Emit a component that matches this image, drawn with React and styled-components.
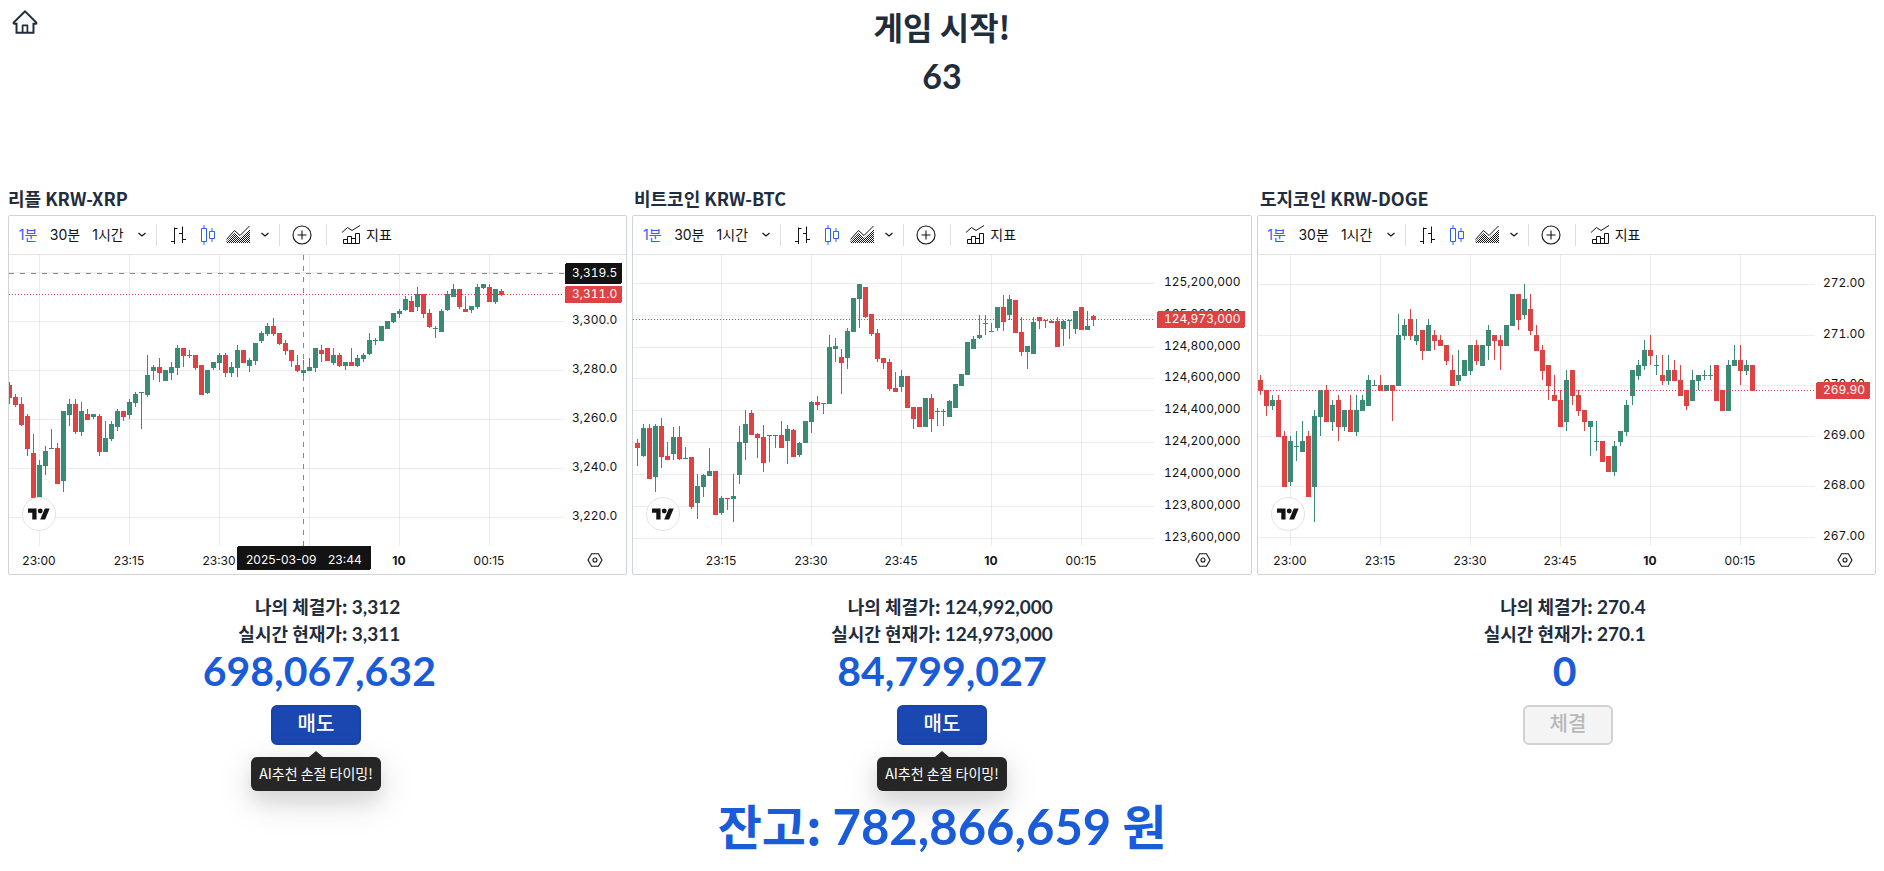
import React, { useId } from "react";
import styled, { createGlobalStyle, css } from "styled-components";
import { AiOutlineHome } from "react-icons/ai";

const GlobalStyle = createGlobalStyle`
  *, *::before, *::after { box-sizing: border-box; }
  body {
    margin: 0;
    background: #fff;
    color: #1f2d3d;
    font-family: "Noto Sans CJK KR", "Noto Sans", sans-serif;
    font-size: 18px;
    line-height: 27px;
  }
  h1, h2, p { margin: 0; }
  button { font-family: inherit; }
`;

const UP = "#3a8a76";
const DOWN = "#df4242";
const INK = "#131313";
const BLUE = "#2962ff";

/* ---------- market data ---------- */

// Each candle is "direction high,bodyTop,bodyBottom,low". Levels are counted
// downwards in thirds of a pixel, and the plot starts at level 225.
const LEVEL_TOP = 225;
const levelToY = (level) => Math.round((level - LEVEL_TOP) / 3);

const parseCandles = (source) =>
  source
    .trim()
    .split(/\s+/)
    .map((item) => ({
      up: item[0] === "g",
      levels: item.slice(1).split(",").map(Number),
    }));

const XRP = parseCandles(`
r606,615,655,672 r642,651,675,681 r651,672,735,738 r702,708,807,828 r762,819,955,955
g840,855,955,955 g798,813,858,885 g747,804,807,807 r789,804,912,912 g693,693,903,936
g657,672,705,738 r657,672,756,762 g666,693,756,768 r687,702,720,720 g702,702,711,717
r702,708,816,828 g723,774,816,816 g723,732,777,783 g687,693,741,753 r693,693,711,723
g657,666,705,717 g636,642,669,681 g636,636,639,747 g525,585,645,651 g555,561,573,600
r534,561,579,606 g570,570,603,603 g546,561,579,600 g495,504,564,585 r504,504,528,561
g510,525,528,534 r525,525,564,570 r555,555,645,645 g570,570,639,642 g546,546,564,570
g519,525,549,570 r519,525,579,591 g546,561,579,591 g495,510,564,591 r510,510,549,549
g534,540,558,576 g489,489,543,555 g453,459,483,489 g429,438,462,468 r414,438,462,468
r459,459,492,495 r480,489,513,525 r510,510,543,561 r525,555,573,576 g540,570,579,591
g534,561,573,573 g504,504,564,576 r495,510,522,546 r504,504,543,543 g504,525,549,555
r519,525,558,561 g546,546,558,570 r504,546,558,558 g525,534,558,561 g519,525,537,546
g459,480,522,525 g474,480,483,495 g438,438,483,483 g423,423,447,447 g399,399,426,429
g387,393,402,414 g348,357,390,393 r348,363,396,396 g321,342,381,393 r342,342,402,414
r387,399,441,444 g438,444,447,474 g387,393,456,456 g333,342,390,393 g312,327,351,351
r327,327,381,387 r348,387,396,396 g378,378,390,399 g312,321,381,387 g312,312,324,327
r312,321,366,366 g327,327,366,372 r327,333,345,348`);

const BTC = parseCandles(`
r777,789,804,858 g732,744,828,831 r732,744,897,897 g732,738,891,936 r714,738,831,864
r786,828,840,840 g741,771,822,840 r738,771,837,840 g801,834,837,837 r831,831,981,987
g882,918,969,1017 g882,885,921,951 g804,873,888,888 r873,873,1005,1005 g948,954,999,1005
r954,954,957,990 g882,948,957,1026 g738,786,885,912 g690,732,789,840 r690,699,765,765
r759,762,774,834 r735,771,849,876 r765,765,768,846 r765,765,768,804 r723,765,804,804
g735,747,783,852 r747,750,831,831 g786,789,825,831 g723,723,789,789 g663,666,726,759
r648,666,675,690 g669,669,672,702 g465,501,672,672 g474,498,507,546 r507,531,549,642
g444,453,534,567 g354,354,456,456 g312,312,357,444 r321,321,411,414 r402,402,462,468
r447,459,537,546 r534,534,549,567 r537,546,627,633 r576,624,636,636 g570,588,621,636
r588,588,684,684 r681,681,717,747 r681,681,741,741 g654,654,741,741 r642,654,717,756
r684,693,696,738 g687,693,696,738 g660,663,711,711 g612,612,684,684 g582,582,618,618
g486,486,585,585 g468,477,507,507 g405,465,474,477 r405,429,432,465 g429,453,456,456
g381,381,444,453 r345,381,426,453 g345,357,405,420 r360,360,459,459 r411,456,516,528
g498,498,516,567 g411,426,522,522 r411,411,423,447 r420,420,423,444 r420,423,429,429
r411,423,501,501 g420,423,447,498 g420,420,423,477 g393,393,447,462 r381,381,450,450
g393,438,450,450 r405,408,420,438`);

const DOGE = parseCandles(`
r585,600,633,645 r630,630,678,708 g645,660,678,690 r645,660,771,771 r753,768,921,921
g768,783,906,918 g753,798,801,843 g723,783,816,816 r753,768,951,951 g690,708,921,1026
g630,630,711,768 r615,630,726,726 g660,675,726,753 r645,660,741,783 g690,690,741,753
r645,690,756,756 g645,690,756,768 g645,660,693,693 g585,600,678,678 g600,615,618,618
r585,615,633,633 g615,615,633,633 r615,615,633,723 g402,465,618,618 g417,435,468,480
r387,417,468,480 g417,465,483,495 r450,450,513,540 g417,435,513,513 r450,465,483,510
r465,480,498,498 r495,495,543,555 r525,570,618,618 g510,585,603,615 g540,540,588,588
g495,495,573,585 r480,495,543,555 g495,495,558,558 g435,450,498,540 r465,465,483,540
r465,480,498,570 g435,435,498,498 g342,342,438,438 r342,342,420,450 g312,357,405,417
r342,387,453,465 r435,465,513,513 r495,510,573,600 r555,555,618,660 r585,645,663,663
r630,660,741,741 g570,600,726,753 r570,570,648,675 r630,645,693,708 r690,690,726,753
g723,723,741,828 g723,783,786,813 r783,783,846,846 r828,828,876,876 g783,798,876,888
g753,753,786,798 g660,675,756,768 g570,570,648,675 g540,555,588,600 g480,510,558,570
r465,510,528,555 g525,555,558,585 r525,585,603,615 g525,570,603,615 r540,570,603,603
r555,600,648,648 r630,630,678,690 g570,600,663,663 g585,585,603,630 g570,585,588,600
g555,585,588,600 r555,555,663,663 r630,630,693,693 g540,555,693,693 g495,540,558,558
r495,540,573,615 g540,555,573,585 r555,555,633,633`);

const MARKETS = [
  {
    id: "xrp",
    title: "리플 KRW-XRP",
    candles: XRP,
    start: 0,
    axisWidth: 62,
    prices: [[276, ""], [423, "3,300.0"], [570, "3,280.0"], [717, "3,260.0"], [864, "3,240.0"], [1011, "3,220.0"]],
    times: [[30, "23:00"], [120, "23:15"], [210, "23:30"], [300, ""], [390, "10"], [480, "00:15"]],
    last: { level: 342, label: "3,311.0", width: 57 },
    cursor: { x: 294, y: 18, price: "3,319.5", date: "2025-03-09", time: "23:44" },
    bought: "3,312",
    now: "3,311",
    value: "698,067,632",
    action: "매도",
    hint: "AI추천 손절 타이밍!",
  },
  {
    id: "btc",
    title: "비트코인 KRW-BTC",
    candles: BTC,
    start: 4,
    axisWidth: 95,
    prices: [
      [309, "125,200,000"], [405, "125,000,000"], [501, "124,800,000"], [594, "124,600,000"], [690, "124,400,000"],
      [786, "124,200,000"], [882, "124,000,000"], [978, "123,800,000"], [1074, "123,600,000"],
    ],
    times: [[88, "23:15"], [178, "23:30"], [268, "23:45"], [358, "10"], [448, "00:15"]],
    last: { level: 417, label: "124,973,000", width: 88 },
    bought: "124,992,000",
    now: "124,973,000",
    value: "84,799,027",
    action: "매도",
    hint: "AI추천 손절 타이밍!",
  },
  {
    id: "doge",
    title: "도지코인 KRW-DOGE",
    candles: DOGE,
    start: 2,
    axisWidth: 60,
    prices: [[312, "272.00"], [465, "271.00"], [615, "270.00"], [768, "269.00"], [918, "268.00"], [1071, "267.00"]],
    times: [[32, "23:00"], [122, "23:15"], [212, "23:30"], [302, "23:45"], [392, "10"], [482, "00:15"]],
    last: { level: 630, label: "269.90", width: 54 },
    bought: "270.4",
    now: "270.1",
    value: "0",
    action: "체결",
    disabled: true,
  },
];

/* ---------- icons ---------- */

const Icon = styled.svg`
  display: block;
  flex: none;
  fill: none;
  stroke: currentColor;
`;

const ChevronIcon = () => (
  <Icon width="10" height="6" viewBox="0 0 10 6" strokeWidth="1.2" aria-hidden="true">
    <path d="M1.5 1l3.5 3 3.5-3" />
  </Icon>
);

const BarsIcon = () => (
  <Icon width="28" height="28" viewBox="0 0 28 28" aria-hidden="true">
    <path d="M10.500 6.500v16.500M10.500 7.500h3M7 20.500h3M18.500 5.500v16.500M15 12.500h3M19 18.500h3" />
  </Icon>
);

const CandlesIcon = () => (
  <Icon width="28" height="28" viewBox="0 0 28 28" aria-hidden="true">
    <path d="M7.500 7.500h5v13h-5zM10 4v3M10 21v3M15.500 10.500h5v7h-5zM18 7v3M18 18v3" />
  </Icon>
);

const AreaIcon = () => {
  const id = useId();
  return (
    <Icon width="28" height="28" viewBox="0 0 28 28" aria-hidden="true">
      <defs>
        <pattern id={id} width="2" height="2" patternUnits="userSpaceOnUse">
          <path d="M0 0h1v1h-1zM1 1h1v1h-1z" fill={INK} stroke="none" />
        </pattern>
      </defs>
      <path d="M2.500 18.500l8-9 5.500 5L25.500 5" />
      <path d="M2 22v-1l8.500-9 5.500 5 10-9v14z" fill={`url(#${id})`} stroke="none" />
    </Icon>
  );
};

const PlusIcon = () => (
  <Icon width="28" height="28" viewBox="0 0 28 28" aria-hidden="true">
    <circle cx="14" cy="14" r="9" strokeWidth="1.1" />
    <path d="M9.500 14h9M14 9.500v9" strokeWidth="1.1" />
  </Icon>
);

const IndicatorIcon = () => (
  <Icon width="28" height="28" viewBox="0 0 28 28" aria-hidden="true">
    <path d="M5 11.500l5.500-5 4.500 3 8-5" />
    <path d="M6.500 22.500v-4h4v-3h4v2h4v-5h4v10zM10.500 22v-4M14.500 22v-5M18.500 22v-5" />
  </Icon>
);

const ScaleIcon = () => (
  <Icon width="16" height="16" viewBox="0 0 16 16" aria-hidden="true">
    <path d="M4.600 1.700h6.800L15 8l-3.600 6.300H4.600L1 8z" strokeWidth="1.100" />
    <circle cx="8" cy="8" r="2" strokeWidth="1.100" />
  </Icon>
);

const LogoIcon = () => (
  <svg width="22" height="12" viewBox="0 4 36 18" aria-hidden="true">
    <path d="M14 22H7V11H0V4h14v18zM28 22h-8l7.500-18h8L28 22z" fill={INK} />
    <circle cx="20" cy="8" r="4" fill={INK} />
  </svg>
);

/* ---------- page ---------- */

const Page = styled.main`
  position: relative;
  padding: 2px 8px 8px;
`;

const HomeLink = styled.a`
  position: absolute;
  top: 8px;
  left: 11px;
  display: flex;
  color: inherit;
  font-size: 28px;
`;

const Header = styled.header`
  display: grid;
  row-gap: 2px;
  margin-bottom: 85px;
  text-align: center;
`;

const Heading = styled.h1`
  font-size: 32px;
  line-height: 48px;
  font-weight: 700;
`;

const Countdown = styled.p`
  font-family: Lato, sans-serif;
  font-size: 34px;
  line-height: 48px;
  font-weight: 700;
`;

const Columns = styled.div`
  display: grid;
  grid-template-columns: repeat(3, minmax(0, 1fr));
  column-gap: ${(p) => p.$gap || 0}px;
  margin-top: ${(p) => p.$top || 0}px;
`;

const ChartTitle = styled.h2`
  font-size: 18px;
  line-height: 27px;
  font-weight: 700;
`;

/* ---------- chart widget ---------- */

const Widget = styled.section`
  height: 360px;
  border: 1px solid #d1d4d6;
  border-radius: 2px;
  color: ${INK};
  font-family: Inter, "Noto Sans CJK KR", sans-serif;
`;

const Toolbar = styled.div`
  display: flex;
  align-items: center;
  height: 39px;
  padding-left: 3px;
  border-bottom: 1px solid #e0e3e6;
`;

const ToolButton = styled.button`
  display: flex;
  align-items: center;
  justify-content: center;
  flex: none;
  gap: 1px;
  height: 28px;
  padding: 0 ${(p) => p.$pad || 0}px;
  margin: 0;
  ${(p) => p.$width && css`width: ${p.$width}px;`}
  border: 0;
  background: none;
  color: ${(p) => (p.$active ? BLUE : INK)};
  font-size: 14px;
  line-height: 28px;
  white-space: nowrap;
`;

const Divider = styled.span`
  flex: none;
  width: 1px;
  height: 22px;
  margin: 0 6px 0 ${(p) => p.$lead || 2}px;
  background: #dcdfe2;
`;

const ChartGrid = styled.div`
  position: relative;
  display: grid;
  grid-template-columns: minmax(0, 1fr) ${(p) => p.$axis}px;
  grid-template-rows: 291px 28px;
`;

const Surface = styled.svg`
  display: block;
  width: 100%;
  height: 100%;
  overflow: hidden;
  shape-rendering: crispEdges;

  text {
    font-family: Inter, sans-serif;
    font-size: 12px;
    fill: ${INK};
  }
`;

const PriceScale = styled(Surface)`
  font-variant-numeric: tabular-nums;
`;

const TagText = styled.text`
  && { fill: #fff; }
`;

const ScaleButton = styled.button`
  display: flex;
  align-items: center;
  justify-content: center;
  padding: 0;
  border: 0;
  background: none;
  color: ${INK};
`;

const LogoLink = styled.a`
  position: absolute;
  left: 13px;
  top: 242px;
  display: flex;
  align-items: center;
  justify-content: center;
  width: 34px;
  height: 34px;
  border: 1px solid #e0e3e6;
  border-radius: 50%;
  background: #fff;
`;

function Candle({ x, up, levels }) {
  const [high, top, bottom, low] = levels.map(levelToY);
  const fill = up ? UP : DOWN;
  return (
    <g fill={fill}>
      <rect x={x} y={high} width="1" height={Math.max(low - high, 1)} />
      <rect x={x - 2} y={top} width="5" height={Math.max(bottom - top, 1)} />
    </g>
  );
}

function Chart({ market }) {
  const { candles, start, prices, times, last, cursor, axisWidth, title } = market;
  const lastY = levelToY(last.level);
  return (
    <Widget aria-label={title}>
      <Toolbar>
        <ToolButton $width={32} $active>1분</ToolButton>
        <ToolButton $width={42}>30분</ToolButton>
        <ToolButton $width={44}>1시간</ToolButton>
        <ToolButton $width={24} aria-label="시간 간격"><ChevronIcon /></ToolButton>
        <Divider />
        <ToolButton $width={30} aria-label="바"><BarsIcon /></ToolButton>
        <ToolButton $width={30} $active aria-label="캔들"><CandlesIcon /></ToolButton>
        <ToolButton $width={30} aria-label="영역"><AreaIcon /></ToolButton>
        <ToolButton $width={24} aria-label="차트 종류"><ChevronIcon /></ToolButton>
        <Divider />
        <ToolButton $width={32} aria-label="비교"><PlusIcon /></ToolButton>
        <Divider $lead={8} />
        <ToolButton $pad={4}><IndicatorIcon />지표</ToolButton>
      </Toolbar>
      <ChartGrid $axis={axisWidth}>
        <Surface role="img" aria-label={`${title} 차트`}>
          <g fill="rgba(0, 0, 0, 0.07)">
            {prices.map(([level]) => (
              <rect key={level} x="0" y={levelToY(level)} width="100%" height="1" />
            ))}
            {times.map(([x]) => (
              <rect key={x} x={x} y="0" width="1" height="291" />
            ))}
          </g>
          {candles.map((c, i) => (
            <Candle key={i} x={start + i * 6} up={c.up} levels={c.levels} />
          ))}
          <line x1="0" x2="100%" y1={lastY + 0.5} y2={lastY + 0.5} stroke={DOWN} strokeDasharray="1 2" />
          {cursor && (
            <g stroke="#85878c" strokeDasharray="5 6">
              <line x1="0" x2="100%" y1={cursor.y + 0.5} y2={cursor.y + 0.5} />
              <line x1={cursor.x + 0.5} x2={cursor.x + 0.5} y1="0" y2="291" />
            </g>
          )}
        </Surface>
        <PriceScale>
          {prices.filter(([, label]) => label).map(([level, label]) => (
            <text key={level} x="8" y={levelToY(level) + 3}>{label}</text>
          ))}
          {cursor && (
            <>
              <rect x="1" y={cursor.y - 10} width={last.width} height="21" rx="2" fill={INK} />
              <TagText x="8" y={cursor.y + 4}>{cursor.price}</TagText>
            </>
          )}
          <rect x="1" y={lastY - 8} width={last.width} height="17" rx="2" fill={DOWN} />
          <TagText x="8" y={lastY + 4}>{last.label}</TagText>
        </PriceScale>
        <Surface>
          {times.filter(([, label]) => label).map(([x, label]) => (
            <text key={x} x={x} y="19" textAnchor="middle" fontWeight={label === "10" ? 700 : 400}>{label}</text>
          ))}
          {cursor && (
            <>
              <rect x={cursor.x - 66} y="0" width="134" height="24" rx="2" fill={INK} />
              <TagText x={cursor.x - 57} y="18">{cursor.date}</TagText>
              <TagText x={cursor.x + 25} y="18">{cursor.time}</TagText>
            </>
          )}
        </Surface>
        <ScaleButton aria-label="스케일 설정"><ScaleIcon /></ScaleButton>
        <LogoLink href="#" aria-label="TradingView"><LogoIcon /></LogoLink>
      </ChartGrid>
    </Widget>
  );
}

/* ---------- trading panel ---------- */

const Quote = styled.div`
  display: flex;
  flex-direction: column;
  align-items: center;
`;

const QuoteLines = styled.div`
  text-align: right;
  font-weight: 700;

  p { height: 27px; }
`;

const Figure = styled.span`
  font-family: Lato, sans-serif;
  font-size: 19px;
`;

const Value = styled.p`
  color: #1a5bd8;
  font-family: Lato, sans-serif;
  font-size: 41px;
  line-height: 48px;
  font-weight: 700;
`;

const TradeCell = styled.div`
  display: flex;
  justify-content: center;
`;

const Trade = styled.div`
  position: relative;
`;

const TradeButton = styled.button`
  display: block;
  width: 90px;
  height: 40px;
  padding: 0 0 4px;
  border: 2px solid #1a43a8;
  border-radius: 6px;
  background: #1b47b0;
  color: #fff;
  font-size: 20px;
  line-height: 32px;
  font-weight: 500;

  &:disabled {
    border-color: #d2d2d2;
    background: #f4f4f4;
    color: #b8b8b8;
  }
`;

const Tooltip = styled.div`
  position: absolute;
  top: 52px;
  left: 50%;
  width: 130px;
  height: 34px;
  border-radius: 6px;
  background: #262626;
  box-shadow: 0 10px 38px rgba(14, 18, 22, 0.13), 0 10px 20px rgba(14, 18, 22, 0.1);
  color: #fff;
  font-size: 14px;
  line-height: 32px;
  text-align: center;
  white-space: nowrap;
  transform: translateX(-50%);

  &::before {
    content: "";
    position: absolute;
    left: 50%;
    bottom: 100%;
    margin-left: -7px;
    border: 7px solid transparent;
    border-top: 0;
    border-bottom: 6px solid #262626;
  }
`;

const Balance = styled.p`
  margin-top: 43px;
  position: relative;
  color: #1a5bd8;
  font-size: 48px;
  line-height: 72px;
  font-weight: 700;
  text-align: center;
`;

const BalanceFigure = styled.span`
  font-family: Lato, sans-serif;
  font-size: 49px;
  line-height: 1;
`;

export default function App() {
  return (
    <>
      <GlobalStyle />
      <Page>
        <HomeLink href="#" aria-label="홈"><AiOutlineHome /></HomeLink>
        <Header>
          <Heading>게임 시작!</Heading>
          <Countdown>63</Countdown>
        </Header>
        <Columns $gap={10}>
          {MARKETS.map((m) => <ChartTitle key={m.id}>{m.title}</ChartTitle>)}
        </Columns>
        <Columns $gap={5} $top={3}>
          {MARKETS.map((m) => <Chart key={m.id} market={m} />)}
        </Columns>
        <Columns $top={18}>
          {MARKETS.map((m) => (
            <Quote key={m.id}>
              <QuoteLines>
                <p>나의 체결가: <Figure>{m.bought}</Figure></p>
                <p>실시간 현재가: <Figure>{m.now}</Figure></p>
              </QuoteLines>
              <Value>{m.value}</Value>
            </Quote>
          ))}
        </Columns>
        <Columns $gap={10} $top={10}>
          {MARKETS.map((m) => (
            <TradeCell key={m.id}>
              <Trade>
                <TradeButton disabled={m.disabled} aria-describedby={m.hint && `${m.id}-hint`}>{m.action}</TradeButton>
                {m.hint && <Tooltip role="tooltip" id={`${m.id}-hint`}>{m.hint}</Tooltip>}
              </Trade>
            </TradeCell>
          ))}
        </Columns>
        <Balance>잔고: <BalanceFigure>782,866,659</BalanceFigure> 원</Balance>
      </Page>
    </>
  );
}
